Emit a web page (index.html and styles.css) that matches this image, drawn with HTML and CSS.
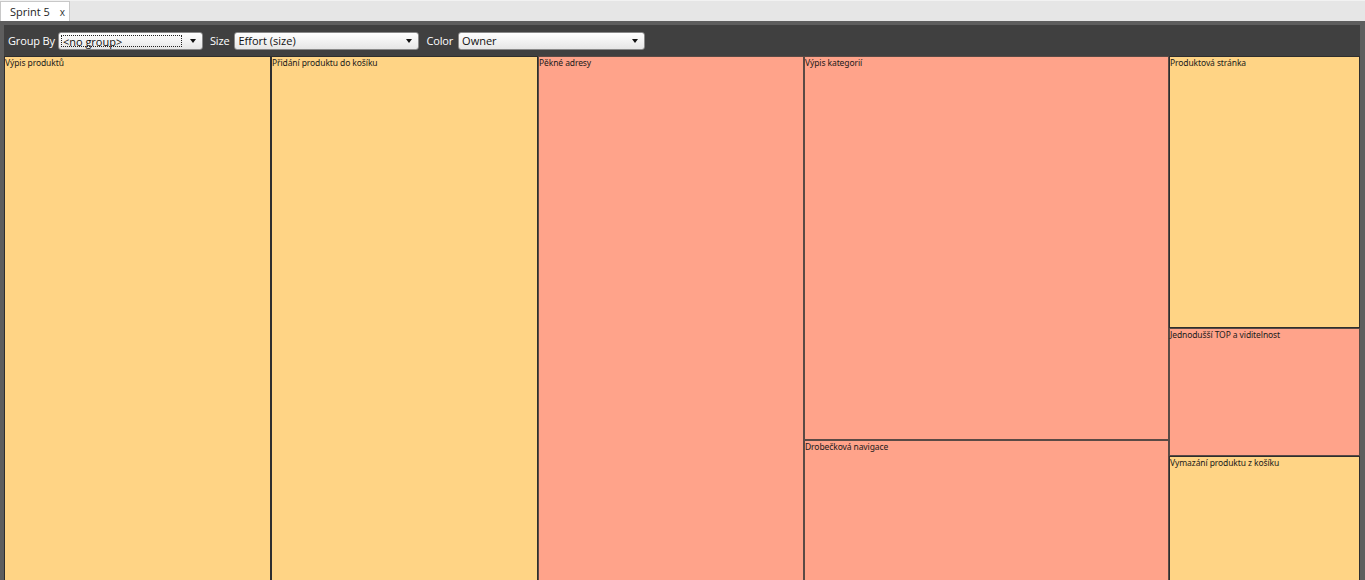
FILE: index.html
```html
<!DOCTYPE html>
<html>
<head>
<meta charset="utf-8">
<link rel="stylesheet" href="styles.css">
</head>
<body>
<div class="tabstrip">
  <div class="tab"><span class="tab-title">Sprint 5</span><span class="tab-close">x</span></div>
</div>
<div class="frame">
  <div class="toolbar">
    <span class="lbl">Group By</span>
    <div class="combo combo-group"><span class="focus">&lt;no group&gt;</span><span class="arrow"></span></div>
    <span class="lbl">Size</span>
    <div class="combo combo-size"><span class="val">Effort (size)</span><span class="arrow"></span></div>
    <span class="lbl">Color</span>
    <div class="combo combo-color"><span class="val">Owner</span><span class="arrow"></span></div>
  </div>
  <div class="treemap">
    <div class="col c1"><div class="cell yellow grow">Výpis produktů</div></div>
    <div class="col c2"><div class="cell yellow grow">Přidání produktu do košíku</div></div>
    <div class="col c3"><div class="cell salmon grow">Pěkné adresy</div></div>
    <div class="col c4">
      <div class="cell salmon h384">Výpis kategorií</div>
      <div class="cell salmon grow">Drobečková navigace</div>
    </div>
    <div class="col c5">
      <div class="cell yellow h272">Produktová stránka</div>
      <div class="cell salmon h128">Jednodušší TOP a viditelnost</div>
      <div class="cell yellow grow">Vymazání produktu z košíku</div>
    </div>
  </div>
</div>
</body>
</html>
```
FILE: styles.css
```css
html, body {
  margin: 0;
  padding: 0;
  background: #5e5e5e;
  overflow: hidden;
  font-family: "Open Sans", "Noto Sans", sans-serif;
}
.tabstrip {
  height: 21px;
  background: #e6e6e6;
  border-top: 1px solid #f2f2f2;
  box-sizing: border-box;
  display: flex;
  align-items: flex-end;
}
.tab {
  height: 20px;
  width: 70px;
  box-sizing: border-box;
  background: #ffffff;
  border: 1px solid #c8c8c8;
  border-bottom: none;
  display: flex;
  align-items: center;
  padding-left: 9px;
  font-size: 11px;
  color: #1e1e1e;
}
.tab-close {
  margin-left: 10px;
  font-size: 10px;
  color: #333;
}
.frame {
  height: 559px;
  background: #5e5e5e;
  padding: 4px 5px 0 4px;
  box-sizing: border-box;
  display: flex;
  flex-direction: column;
}
.toolbar {
  height: 31px;
  background: #404040;
  display: flex;
  align-items: center;
  padding-left: 4px;
  flex: none;
}
.lbl {
  color: #ffffff;
  font-size: 11px;
  letter-spacing: -0.15px;
  margin-right: 4px;
}
.combo {
  height: 18px;
  box-sizing: border-box;
  border: 1px solid #8a8a8a;
  border-radius: 3px;
  background: linear-gradient(#ffffff, #e6e6e6);
  display: flex;
  align-items: center;
  position: relative;
  margin-right: 7px;
  font-size: 11px;
  color: #111;
}
.combo-group { width: 145px; margin-left: -1px; }
.combo-size { width: 185px; margin-left: 1px; }
.combo-color { width: 187px; margin-left: 1px; }
.focus {
  margin-left: 2px;
  width: 121px;
  height: 12px;
  line-height: 11px;
  box-sizing: border-box;
  border: 1px dotted #222;
  padding-left: 1px;
}
.val {
  margin-left: 3px;
}
.arrow {
  position: absolute;
  right: 6px;
  top: 6px;
  width: 0;
  height: 0;
  border-left: 3.5px solid transparent;
  border-right: 3.5px solid transparent;
  border-top: 4px solid #111;
}
.treemap {
  flex: 1;
  display: flex;
  background: #404040;
  overflow: hidden;
}
.col {
  display: flex;
  flex-direction: column;
  height: 530px;
  flex: none;
}
.c1 { width: 267px; }
.c2 { width: 267px; }
.c3 { width: 266px; }
.c4 { width: 365px; }
.c5 { width: 191px; }
.cell {
  box-sizing: border-box;
  border: 1px solid #2e2e2e;
  font-family: "Noto Sans", "Open Sans", sans-serif;
  font-size: 8.5px;
  line-height: 12px;
  color: #1a1a1a;
  padding-left: 0;
  letter-spacing: -0.1px;
  flex: none;
}
.grow { flex: 1; }
.yellow { background: #ffd485; }
.salmon { background: #ffa38a; border-color: #5a4a45; }
.h384 { height: 384px; }
.h272 { height: 272px; }
.h128 { height: 128px; }
```
